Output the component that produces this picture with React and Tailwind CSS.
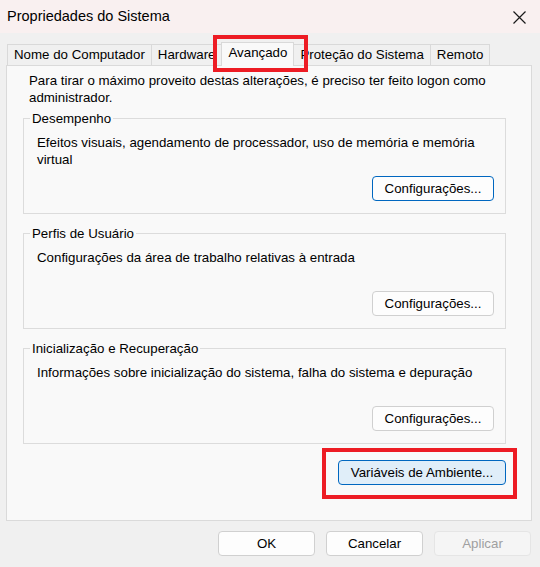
import React, { useState } from 'react';

const tabs = ['Nome do Computador', 'Hardware', 'Avançado', 'Proteção do Sistema', 'Remoto'];

const groups = [
  {
    title: 'Desempenho',
    text: 'Efeitos visuais, agendamento de processador, uso de memória e memória virtual',
    focused: true,
  },
  {
    title: 'Perfis de Usuário',
    text: 'Configurações da área de trabalho relativas à entrada',
  },
  {
    title: 'Inicialização e Recuperação',
    text: 'Informações sobre inicialização do sistema, falha do sistema e depuração',
  },
];

// estilos dos botões no padrão do Windows 11
const buttonStyles = {
  normal: 'bg-[#fdfdfd] border-[#d0d0d0] text-black',
  focused: 'bg-[#fdfdfd] border-[#0067c0] text-black',
  hover: 'bg-[#e0eef9] border-[#0067c0] text-black',
  disabled: 'bg-[#f5f5f5] border-[#e5e5e5] text-[#a0a0a0]',
};

const WinButton = ({ children, variant = 'normal', className = '' }) => (
  <button
    className={`h-[25px] flex items-center justify-center rounded-[4px] border text-[13.3px] leading-none ${buttonStyles[variant]} ${className}`}
  >
    {children}
  </button>
);

const GroupBox = ({ title, text, focused }) => (
  <fieldset className="w-[483px] border border-[#dcdcdc] pl-[13px] pr-[11px] pb-[12px] mt-[11px] first-of-type:mt-[4px]">
    <legend className="-ml-[7px] px-[2px] leading-[17px]">{title}</legend>
    <p className="h-[34px] mt-[7px] leading-[17px]">{text}</p>
    <div className="flex justify-end mt-[8px]">
      <WinButton variant={focused ? 'focused' : 'normal'} className="w-[122px]">
        Configurações...
      </WinButton>
    </div>
  </fieldset>
);

const App = () => {
  const [active, setActive] = useState('Avançado');

  return (
    <div className="relative w-[540px] h-[567px] overflow-hidden bg-[#f0f0f0] text-black font-['Liberation_Sans',Arial,sans-serif] text-[13.3px]">
      {/* Barra de título */}
      <div className="h-[33px] bg-[#f9f0f0] flex items-center justify-between pl-[7px] pr-[14px]">
        <span className="text-[14.5px]">Propriedades do Sistema</span>
        <svg width="13" height="13" viewBox="0 0 13 13" className="mt-[1px]">
          <path d="M0.5 0.5 L12.5 12.5 M12.5 0.5 L0.5 12.5" stroke="#1a1a1a" strokeWidth="1.2" />
        </svg>
      </div>

      {/* Abas */}
      <div className="flex items-end pl-[7px] mt-[9px] h-[23px]">
        {tabs.map((tab, i) => (
          <button
            key={tab}
            onClick={() => setActive(tab)}
            className={
              tab === active
                ? 'relative z-10 h-[24px] -mb-px px-[6px] pb-[3px] bg-[#f9f9f9] border border-b-0 border-[#d9d9d9] -ml-px'
                : `h-[21px] px-[6px] bg-[#f0f0f0] border border-b-0 border-[#d9d9d9] ${i === 0 ? '' : '-ml-px'}`
            }
          >
            {tab}
          </button>
        ))}
      </div>

      {/* Painel da aba */}
      <div className="ml-[6px] w-[526px] h-[456px] bg-[#f9f9f9] border border-[#dadada] pl-[16px] pt-[6px]">
        <p className="w-[477px] pl-[6px] leading-[17px]">
          Para tirar o máximo proveito destas alterações, é preciso ter feito logon como administrador.
        </p>
        {groups.map((g) => (
          <GroupBox key={g.title} {...g} />
        ))}
        <div className="w-[483px] flex justify-end mt-[16px]">
          <WinButton variant="hover" className="w-[168px]">
            Variáveis de Ambiente...
          </WinButton>
        </div>
      </div>

      {/* Botões do rodapé */}
      <div className="flex justify-end gap-[11px] pr-[9px] mt-[10px]">
        <WinButton className="w-[97px]">OK</WinButton>
        <WinButton className="w-[97px]">Cancelar</WinButton>
        <WinButton variant="disabled" className="w-[97px]">Aplicar</WinButton>
      </div>

      {/* Destaques em vermelho */}
      <div className="absolute left-[213px] top-[35px] w-[95px] h-[37px] border-4 border-[#ed1c24] pointer-events-none" />
      <div className="absolute left-[322px] top-[448px] w-[195px] h-[51px] border-4 border-[#ed1c24] pointer-events-none" />
    </div>
  );
};

export default App;
